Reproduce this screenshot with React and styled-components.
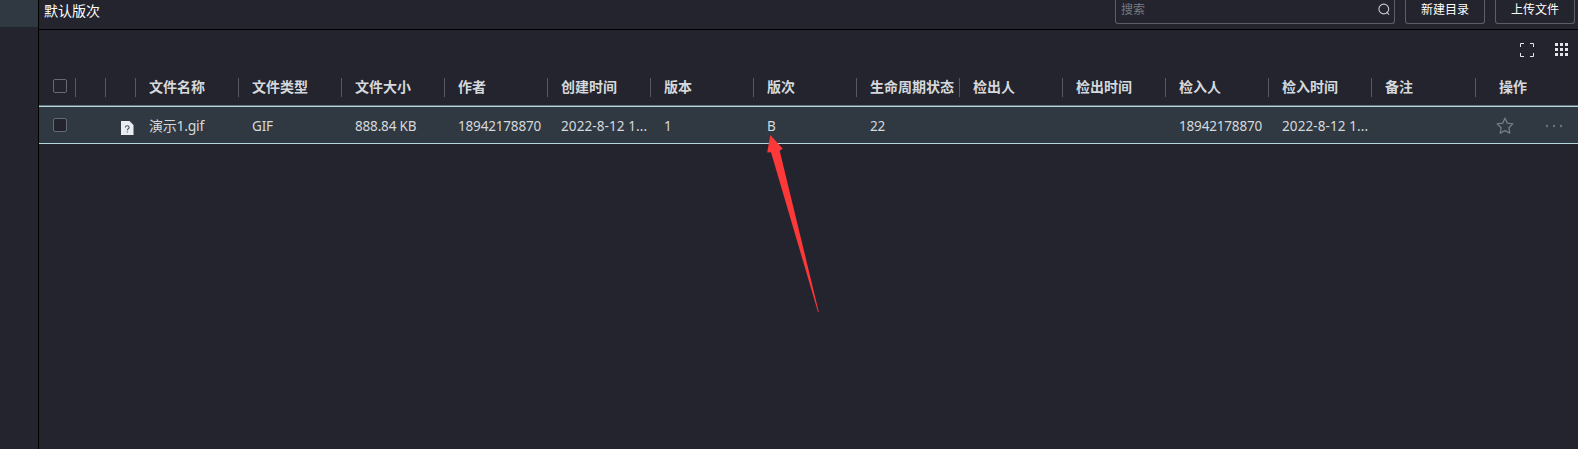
import React from "react";
import styled, { createGlobalStyle } from "styled-components";

const Global = createGlobalStyle`
  * { box-sizing: border-box; }
  body {
    margin: 0;
    background: #23242d;
    overflow: hidden;
    font-family: "Noto Sans", "Noto Sans CJK SC", sans-serif;
    font-size: 14px;
    color: #d5d8dc;
  }
`;

const Page = styled.div`
  display: flex;
  height: 449px;
  position: relative;
`;

const Sidebar = styled.aside`
  width: 39px;
  flex: none;
  border-right: 1px solid #000;
`;

const ActiveItem = styled.div`
  height: 27px;
  background: #303841;
`;

const Main = styled.main`
  flex: 1;
  min-width: 0;
`;

const TopBar = styled.header`
  height: 30px;
  border-bottom: 1px solid #000;
  display: flex;
  align-items: flex-start;
  gap: 10px;
  padding: 0 3px 0 5px;
`;

const Title = styled.h1`
  margin: 0 auto 0 0;
  font: inherit;
  line-height: 21px;
  color: #fff;
`;

const Field = styled.div`
  height: 24px;
  border: 1px solid #5b5f68;
  border-top: 0;
  border-radius: 0 0 3px 3px;
  display: flex;
  justify-content: space-between;
  padding: 0 4px 0 5px;
  width: 280px;
  font-size: 12px;
  line-height: 19px;
  color: #777a80;

  svg { margin-top: 3px; }
`;

const Button = styled.button`
  width: 80px;
  height: 24px;
  border: 1px solid #5b5f68;
  border-top: 0;
  border-radius: 0 0 3px 3px;
  background: transparent;
  color: #fff;
  font-family: inherit;
  font-size: 12px;
  line-height: 19px;
  padding: 0 0 4px;
`;

const ViewTools = styled.div`
  height: 39px;
  display: flex;
  justify-content: flex-end;
  gap: 21px;
  padding: 13px 10px 0 0;
`;

const Row = styled.div`
  display: grid;
  grid-template-columns: 37px 30px 30px repeat(12, 103px) 104px 1fr;
`;

const HeadRow = styled(Row)`
  height: 36px;
  padding-top: 9px;
`;

const HeadCell = styled.div`
  height: 19px;
  line-height: 18px;
  padding-left: ${(p) => p.$inset ?? 13}px;
  border-right: ${(p) => (p.$last ? "0" : "1px solid #555962")};
  font-weight: 700;
  white-space: nowrap;
`;

const FileRow = styled(Row)`
  height: 39px;
  border-top: 1px solid #66767f;
  border-bottom: 1px solid #b5d5df;
  box-shadow: inset 0 1px #b5d5df;
  background: #303841;
`;

const Cell = styled.div`
  padding: ${(p) => (p.$cjk ? 1 : 2)}px 6px 0 ${(p) => p.$inset ?? 13}px;
  line-height: 37px;
  font-size: ${(p) => (p.$cjk ? 14 : 13.5)}px;
  letter-spacing: ${(p) => (p.$cjk ? -0.25 : p.$wide ? 0.1 : -0.17)}px;
  white-space: nowrap;
`;

const Check = styled.span`
  display: block;
  width: 14px;
  height: 14px;
  margin-top: ${(p) => p.$top}px;
  border: 1px solid #666a72;
  border-radius: 2px;
  background: #23242d;
`;

const Actions = styled.div`
  display: flex;
  align-items: flex-start;
  justify-content: space-between;
  padding: 11px 15px 0 20px;
`;

const Arrow = styled.svg`
  position: absolute;
  left: 760px;
  top: 130px;
`;

const SearchIcon = () => (
  <svg width="13" height="13" viewBox="0 0 13 13" fill="none" stroke="#c5c8cd" strokeWidth="1.1">
    <circle cx="6.8" cy="6" r="4.9" />
    <path d="M9.6 8.8 12 11.6" />
  </svg>
);

const ExpandIcon = () => (
  <svg width="14" height="14" viewBox="0 0 14 14" fill="none" stroke="#e4e6e9">
    <path d="M.5 4V.5H4M10 .5h3.5V4M13.5 10v3.5H10M4 13.5H.5V10" />
  </svg>
);

const GridIcon = () => (
  <svg width="13" height="13" viewBox="0 0 13 13" fill="#e4e6e9">
    {[0, 5, 10].map((y) =>
      [0, 5, 10].map((x) => <rect key={x + "-" + y} x={x} y={y} width="3" height="3" />)
    )}
  </svg>
);

const FileIcon = () => (
  <svg width="13" height="14" viewBox="0 0 13 14" style={{ display: "block" }}>
    <path d="M0 0H8.5L12.5 4V14H0Z" fill="#e9ecf3" />
    <path d="M4.4 6.5C4.4 4.2 8.1 4.2 8.1 6.5C8.1 7.9 6.3 7.7 6.3 9.3M6.3 10.4V11.6" fill="none" stroke="#4a4e5a" strokeWidth="1.1" />
  </svg>
);

const FileCell = styled.div`
  padding: 15px 0 0 15px;
`;

const StarIcon = () => (
  <svg width="18" height="18" viewBox="0 0 18 18" fill="none" stroke="#777c84" strokeWidth="1.3" strokeLinejoin="round">
    <path d="M9 1.2 11.3 6.1 16.8 6.9 12.9 10.8 13.8 16.2 9 13.7 4.2 16.2 5.1 10.8 1.2 6.9 6.7 6.1Z" />
  </svg>
);

const MoreIcon = () => (
  <svg width="18" height="18" viewBox="0 0 18 18" fill="#6f747c">
    <circle cx="2" cy="9" r="1.2" />
    <circle cx="9" cy="9" r="1.2" />
    <circle cx="16" cy="9" r="1.2" />
  </svg>
);

const columns = [
  ["文件名称", "演示1.gif"],
  ["文件类型", "GIF"],
  ["文件大小", "888.84 KB"],
  ["作者", "18942178870"],
  ["创建时间", "2022-8-12 1..."],
  ["版本", "1"],
  ["版次", "B"],
  ["生命周期状态", "22"],
  ["检出人", ""],
  ["检出时间", ""],
  ["检入人", "18942178870"],
  ["检入时间", "2022-8-12 1..."],
  ["备注", ""],
];

export default function App() {
  return (
    <>
      <Global />
      <Page>
        <Sidebar>
          <ActiveItem />
        </Sidebar>
        <Main>
          <TopBar>
            <Title>默认版次</Title>
            <Field>
              <span>搜索</span>
              <SearchIcon />
            </Field>
            <Button>新建目录</Button>
            <Button>上传文件</Button>
          </TopBar>
          <ViewTools>
            <ExpandIcon />
            <GridIcon />
          </ViewTools>
          <HeadRow>
            <HeadCell $inset={14}>
              <Check $top={1} />
            </HeadCell>
            <HeadCell />
            <HeadCell />
            {columns.map(([label]) => (
              <HeadCell key={label}>{label}</HeadCell>
            ))}
            <HeadCell $inset={23} $last>操作</HeadCell>
          </HeadRow>
          <FileRow>
            <Cell $inset={14}>
              <Check $top={10} />
            </Cell>
            <div />
            <FileCell>
              <FileIcon />
            </FileCell>
            {columns.map(([label, value], i) => (
              <Cell key={label} $cjk={i === 0} $wide={value.endsWith("...")}>{value}</Cell>
            ))}
            <Actions>
              <StarIcon />
              <MoreIcon />
            </Actions>
          </FileRow>
        </Main>
        <Arrow width="62" height="185" viewBox="0 0 62 185" fill="#fc3838">
          <path d="M10.3 5 22.8 18.8 19.7 20.7 58.8 182 58 182 11 22.3 7.2 22.5Z" />
        </Arrow>
      </Page>
    </>
  );
}
